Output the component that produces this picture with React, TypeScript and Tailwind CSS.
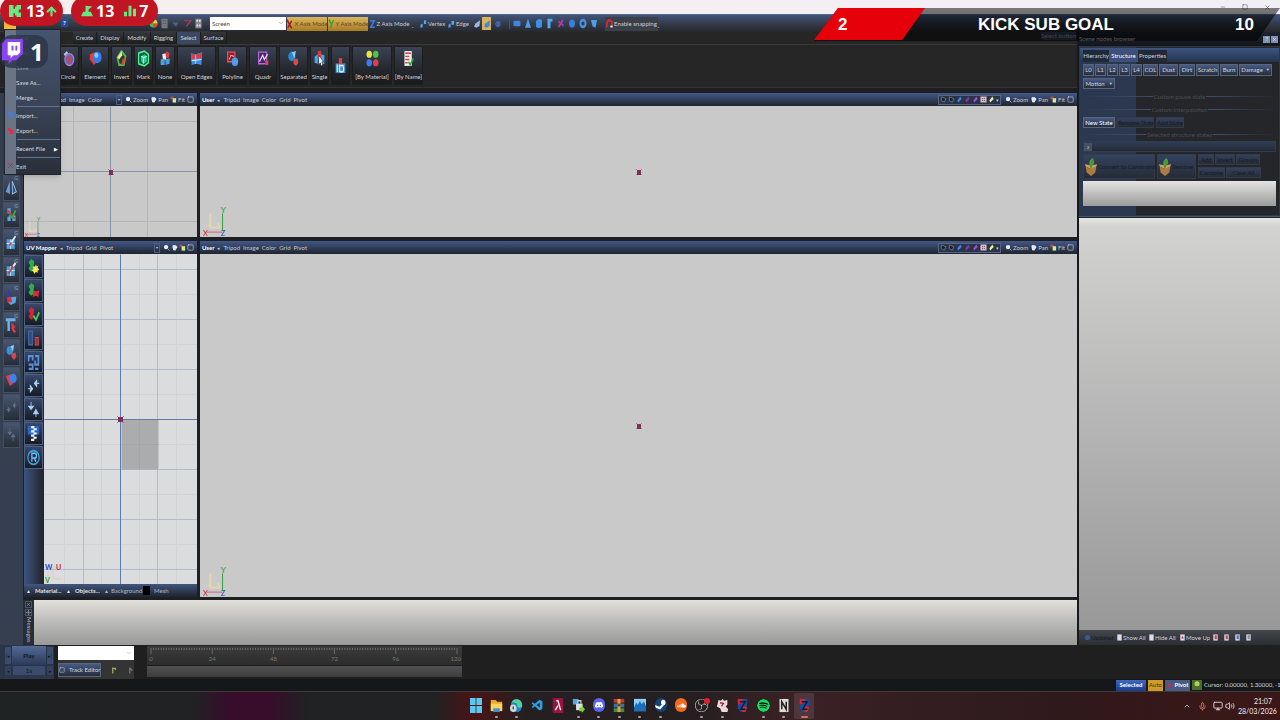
import type { ReactNode } from 'react';
import {
  ArrowUp,
  ChevronDown,
  ChevronUp,
  Mic,
  Minus,
  Monitor,
  Move,
  Square,
  Volume2,
  X,
} from 'lucide-react';
import { SiDiscord, SiSoundcloud, SiSpotify, SiSteam, SiObsstudio } from 'react-icons/si';
import { VscVscode } from 'react-icons/vsc';

type IconProps = { children: ReactNode; className?: string };

function Icon({ children, className = 'size-4' }: IconProps) {
  return (
    <svg
      viewBox="0 0 16 16"
      preserveAspectRatio="none"
      className={`${className} shrink-0`}
      fill="none"
      aria-hidden="true"
    >
      {children}
    </svg>
  );
}

const ribbonTabs = [
  { label: 'Create', width: 'w-[24px]' },
  { label: 'Display', width: 'w-[27px]' },
  { label: 'Modify', width: 'w-[27px]' },
  { label: 'Rigging', width: 'w-[26px]' },
  { label: 'Select', width: 'w-[24px]' },
  { label: 'Surface', width: 'w-[26px]' },
];

const ribbonTools: { label: string; width: string; icon: ReactNode }[] = [
  {
    label: 'Circle',
    width: 'w-[22px]',
    icon: (
      <>
        <path d="M2 4l4-3 3 4-3 3z" fill="#b9c4d6" />
        <circle cx="9" cy="9" r="5.5" fill="#5a6ab4" stroke="#b07ac8" strokeWidth="1.5" />
        <circle cx="9" cy="9" r="3" fill="#c8435c" />
      </>
    ),
  },
  {
    label: 'Element',
    width: 'w-[28px]',
    icon: (
      <>
        <path d="M1 4l6-2 2 10-3 2-5-5z" fill="#e43c3c" />
        <circle cx="10" cy="7" r="5.5" fill="#2f7de6" />
        <circle cx="9" cy="5" r="2.5" fill="#8ec4ff" />
      </>
    ),
  },
  {
    label: 'Invert',
    width: 'w-[21px]',
    icon: (
      <>
        <path d="M8 1l5 5-2 8H5L3 7z" fill="#27402c" stroke="#58b848" strokeWidth="2" />
        <path d="M3 7l5-6 1 4-4 4z" fill="#e8e6a8" />
        <path d="M9 9l4-2-2 7H8z" fill="#d8443c" />
      </>
    ),
  },
  {
    label: 'Mark',
    width: 'w-[19px]',
    icon: (
      <>
        <path d="M2 3l7-2 5 3v8l-5 3-7-2z" fill="#0c5f3e" stroke="#4ff08a" strokeWidth="1.6" />
        <path d="M5 6l4-2 3 2v5l-4 2-3-2z" fill="#35c79c" />
        <path d="M5 6l3 1 4-1M8 7v6" stroke="#b7ffe0" />
      </>
    ),
  },
  {
    label: 'None',
    width: 'w-[20px]',
    icon: (
      <>
        <path d="M9 1l4 2-1 5-4-1z" fill="#e43c3c" />
        <path d="M4 4l4-1 1 6-4 1z" fill="#eceff4" />
        <path d="M2 9l5-1v6H2zM8 9l5-1v5l-5 1z" fill="#4f9fe0" />
      </>
    ),
  },
  {
    label: 'Open Edges',
    width: 'w-[39px]',
    icon: (
      <>
        <path d="M1 3l6 1 8-2-1 12-6-1-6 1z" fill="#3f8fe0" />
        <path d="M1 3l6 2 8-3-1 5-7 2-5-1z" fill="#e23b47" />
        <path d="M7 5v8M2 10l12-1" stroke="#bfe0ff" />
      </>
    ),
  },
  {
    label: 'Polyline',
    width: 'w-[29px]',
    icon: (
      <>
        <path d="M2 2h9v9H2z" fill="#8d1f2c" stroke="#f0505c" strokeWidth="1.4" />
        <path d="M4 9l2-4 4 1" stroke="#ffb0b0" />
        <circle cx="11" cy="11" r="4" fill="#4b9df0" />
      </>
    ),
  },
  {
    label: 'Quadr',
    width: 'w-[28px]',
    icon: (
      <>
        <path d="M2 2h10v11H2z" fill="#46256c" stroke="#b96ad2" strokeWidth="1.4" />
        <path d="M3 11l4-6 2 4 4-5" stroke="#e8d8ff" strokeWidth="1.4" />
        <path d="M10 10h4v4h-4z" fill="#d84458" />
      </>
    ),
  },
  {
    label: 'Separated',
    width: 'w-[29px]',
    icon: (
      <>
        <circle cx="6" cy="6" r="4.5" fill="#2c86d0" />
        <path d="M6 2l5-1-2 7z" fill="#86cdf6" />
        <path d="M8 9l5-1 1 4-3 3-3-2z" fill="#e04848" />
      </>
    ),
  },
  {
    label: 'Single',
    width: 'w-[19px]',
    icon: (
      <>
        <path d="M2 6l4-2v9l-4-1zM10 4l4 1v8l-4 1z" fill="#4aa8ea" />
        <path d="M6 1h4v7H6z" fill="#e43c3c" />
        <path d="M7 5v9l2-2 1 3 2-1-1-3h2z" fill="#fff" stroke="#1b2431" strokeWidth=".6" />
      </>
    ),
  },
  {
    label: '',
    width: 'w-[19px]',
    icon: (
      <>
        <path d="M2 6h12v9H2z" fill="#3e8fd4" />
        <path d="M6 1h4v7H6z" fill="#e43c3c" />
        <path d="M4 7v7M7 7v7M7 8h4l1 3-1 3H7" stroke="#fff" strokeWidth="1.2" />
      </>
    ),
  },
  {
    label: '[By Material]',
    width: 'w-[40px]',
    icon: (
      <>
        <circle cx="4" cy="4" r="3.4" fill="#efe23c" />
        <circle cx="12" cy="4" r="3.4" fill="#4fc24a" />
        <circle cx="4" cy="12" r="3.4" fill="#3c7cf0" />
        <circle cx="12" cy="12" r="3.4" fill="#e43c4c" />
      </>
    ),
  },
  {
    label: '[By Name]',
    width: 'w-[29px]',
    icon: (
      <>
        <path d="M3 1h9v14H3z" fill="#f3f0ee" />
        <path d="M4 3h7M4 6h5M4 9h5M4 12h3" stroke="#c8404c" strokeWidth="1.4" />
        <path d="M8 11l2 3 4-6" stroke="#35a83a" strokeWidth="1.8" />
      </>
    ),
  },
];

const mirrorTools: ReactNode[] = [
  <>
    <path d="M6 2v12L1 12z" fill="#6f9fd8" />
    <path d="M9 2v12l5-2z" fill="#31558c" stroke="#9cc3ec" />
  </>,
  <>
    <path d="M3 2h4v5H3zM9 9h4v5H9zM3 10h4v4H3z" fill="#5caade" />
    <path d="M3 4l9 8" stroke="#d83c3c" strokeWidth="2" />
    <path d="M5 9l4 2 4-7" stroke="#35b048" strokeWidth="2" />
  </>,
  <>
    <path d="M2 5h10v9H2z" fill="#4fa3dc" />
    <path d="M2 9h10M7 5v9" stroke="#bfe4fb" />
    <path d="M5 11l8-9" stroke="#e8edf2" strokeWidth="2" />
    <path d="M5 11l3-3" stroke="#e03c3c" strokeWidth="2" />
  </>,
  <>
    <path d="M2 5h10v9H2z" fill="#4fa3dc" />
    <path d="M2 9h10M7 5v9" stroke="#bfe4fb" />
    <path d="M4 12l9-10" stroke="#d83c3c" strokeWidth="2" />
    <path d="M10 5l3-3" stroke="#f2f4f7" strokeWidth="2" />
  </>,
  <>
    <path d="M5 8l9-1-1 6-6 2-4-3z" fill="#58a8e0" />
    <path d="M5 1v9" stroke="#3038c8" strokeWidth="2.5" />
    <path d="M2 8l5-1 2 5-5 1z" fill="#d83040" />
  </>,
  <>
    <path d="M1 2h12v3H1zM3 5h3v9H3z" fill="#6fb2ea" />
    <path d="M8 6l5 4-2 2 3 3-3 1-3-4z" fill="#e03848" />
  </>,
  <>
    <circle cx="6" cy="6" r="4" fill="#3d8fd8" />
    <path d="M7 2l4-1-1 6z" fill="#9ad4fa" />
    <path d="M8 9l5-1 1 4-3 3-3-3z" fill="#d84450" />
  </>,
  <>
    <path d="M1 5l6-2 3 9-4 2z" fill="#e43c48" />
    <circle cx="10" cy="7" r="4.5" fill="#3b82ea" />
  </>,
  <path d="M2 10h4M6 10l-2-2v4zM14 6h-4M10 6l2-2v4z" stroke="#5e6e86" fill="#5e6e86" />,
  <path d="M6 2v4M6 8L4 6h4zM10 14v-4M10 8l2 2H8z" stroke="#5e6e86" fill="#5e6e86" />,
];

const uvTools: ReactNode[] = [
  <>
    <path d="M5 1l4 2-1 5 2 2-5 3-3-3 2-3-2-3z" fill="#2fae4a" />
    <path d="M11 6l1 2 2-1-1 2 2 2-2 1v2l-2-1-2 2-1-2-2-1 2-2-1-2h3z" fill="#f6ee5c" />
  </>,
  <>
    <path d="M5 1l4 2-1 5 2 2-5 3-3-3 2-3-2-3z" fill="#2fae4a" />
    <path d="M8 8l3 1 4-1-1 6-3-1-4 1z" fill="#de2c3c" />
  </>,
  <>
    <path d="M5 1l4 2-1 5 2 2-5 3-3-3 2-3-2-3z" fill="#cf2638" />
    <path d="M8 9l3 4 4-7" stroke="#3fd060" strokeWidth="2" />
  </>,
  <>
    <path d="M2 1h5v13H2z" fill="#2e4f86" stroke="#4b6fa8" />
    <path d="M10 7h4v7h-4z" fill="#963540" stroke="#c84c54" />
  </>,
  <path d="M2 7V2h5v4M10 2h4v8h-4V6M2 10h5v4H2M10 14h4" stroke="#5d8fe0" strokeWidth="2" />,
  <path d="M1 11h3M7 11l-3-3v6zM15 6h-3M9 6l3-3v6z" stroke="#a9d2f6" fill="#a9d2f6" />,
  <path d="M5 1v4M5 8L2 5h6zM11 15v-3M11 8l3 4H8z" stroke="#a9d2f6" fill="#a9d2f6" />,
  <>
    <path d="M1 1h14v8H1z" fill="#2c66c8" />
    <path d="M5 1h4v2H5zM8 3h4v2H8zM5 5h4v2H5zM8 7h4v2H8zM5 9h4v2H5zM8 11h4v2H8zM5 13h4v2H5z" fill="#eef4fb" />
  </>,
  <>
    <ellipse cx="8" cy="8" rx="7" ry="6.5" stroke="#3fa3e4" strokeWidth="1.5" />
    <path d="M6 12V4h3.500a2 2 0 010 4.500H6M9 8.500l2 3.500" stroke="#6cc4f8" strokeWidth="1.500" />
  </>,
];

const menuItems = [
  { label: 'New', dim: true },
  { label: 'Open...', dim: true },
  { label: 'Save', dim: true },
  { label: 'Save As...' },
  { label: 'Merge...' },
  { label: 'Import...', group: true, icon: '#3f7ee0' },
  { label: 'Export...', icon: '#dc3040' },
  { label: 'Recent File', group: true, submenu: true },
  { label: 'Exit', group: true, exit: true },
];

const materialButtons = [
  { label: 'L0', width: 'w-[11px]' },
  { label: 'L1', width: 'w-[11px]' },
  { label: 'L2', width: 'w-[11px]' },
  { label: 'L3', width: 'w-[11px]' },
  { label: 'L4', width: 'w-[11px]' },
  { label: 'COL', width: 'w-[15px]' },
  { label: 'Dust', width: 'w-[19px]' },
  { label: 'Dirt', width: 'w-[16px]' },
  { label: 'Scratch', width: 'w-[23px]' },
  { label: 'Burn', width: 'w-[18px]' },
];

const primitives: ReactNode[] = [
  <rect x="1" y="4" width="14" height="8" rx="2" fill="#3d86dc" />,
  <path d="M8 1l6 13H2z" fill="#4f9be8" />,
  <path d="M2 4l7-3 5 2v10l-7 2-5-2z" fill="#3b8fe4" />,
  <path d="M3 1h10v4H9v10H3z" fill="#57a8f0" />,
  <path d="M3 13L12 3M3 5l10 6" stroke="#b03cac" strokeWidth="3" />,
  <circle cx="8" cy="8" r="6" fill="#3a7fe0" />,
  <circle cx="8" cy="8" r="5" stroke="#4a90e4" strokeWidth="4" />,
  <path d="M2 3h12l-3 11-6-2z" fill="#4f9fe8" />,
];

const viewGlyphs = ['#6d7b92', '#6d7b92', '#3f86ea', '#7a3fa0', '#a04fd0', '#dfb8c4', '#eef0a0'];

// Shared look of the small raised buttons
const raised =
  'flex items-center justify-center border border-[#59657a] bg-linear-to-b from-[#465a85] to-[#262e3e]';
const disabledRaised =
  'border border-[#343c4a] bg-linear-to-b from-[#34425f] to-[#262b36] text-[#171b23]';

function MainToolbar() {
  return (
    <div className="flex h-[18px] items-center border-t border-[#53688e] bg-linear-to-b from-[#42557b] via-[#343c4b] to-[#26282c] text-[#c9ccd3]">
      <div className="flex h-full w-[210px] shrink-0 items-center gap-[3px] border-b border-[#33373e] pl-[61px]">
        <button aria-label="Help" className="flex w-[7px] justify-center bg-[#274aa0] font-bold text-white">?</button>
        <Icon className="ml-[78px] size-[9px]">
          <circle cx="8" cy="8" r="7" fill="#45b848" />
          <path d="M8 8V1a7 7 0 017 7z" fill="#e8d33c" />
          <path d="M8 8h7a7 7 0 01-7 7z" fill="#dd4638" />
        </Icon>
        <Icon className="h-[11px] w-[7px]"><path d="M1 1h14v14H1z" fill="#77797d" /><path d="M4 4h8M4 8h8" stroke="#44474c" /></Icon>
        <Icon className="size-[9px]"><path d="M2 6h11l-4 8z" fill="#50647c" /></Icon>
        <Icon className="size-[9px]"><path d="M2 3h12L6 13" stroke="#ba3d50" strokeWidth="2" /></Icon>
        <Icon className="h-[11px] w-[7px]"><path d="M1 1h14v14H1z" fill="#888" /><path d="M3 4h4M9 4h4M3 11h4M9 11h4" stroke="#ddd" strokeWidth="3" /></Icon>
      </div>
      <div className="relative mr-px w-[76px] shrink-0">
        <select aria-label="Coordinate space" className="h-[13px] w-full appearance-none bg-white pl-[2px] text-[#444]">
          <option>Screen</option>
        </select>
        <ChevronDown className="pointer-events-none absolute top-[3px] right-[2px] size-[6px] text-gray-500" />
      </div>
      <button className="mr-px flex h-[14px] w-[40px] items-center justify-center gap-px bg-linear-to-b from-[#dbb65e] to-[#a87c25] text-[#664a16]">
        <Icon className="h-[10px] w-[7px]"><path d="M2 1l11 14M13 3L4 14" stroke="#a51820" strokeWidth="3" /></Icon>
        X Axis Mode
      </button>
      <button className="mr-px flex h-[14px] w-[40px] items-center justify-center gap-px bg-linear-to-b from-[#dbb65e] to-[#a87c25] text-[#664a16]">
        <Icon className="h-[10px] w-[7px]"><path d="M2 1l6 7 5-6M8 8l-2 7" stroke="#35a030" strokeWidth="3" /></Icon>
        Y Axis Mode
      </button>
      <button className="flex h-[14px] w-[40px] items-center justify-center gap-px">
        <Icon className="h-[10px] w-[7px]"><path d="M3 3h9L4 13h9" stroke="#3f78dc" strokeWidth="3" /></Icon>
        Z Axis Mode
      </button>
      <span className="mt-[4px] w-[11px] pl-[3px] text-white">.</span>
      <button className="flex w-[28px] items-center gap-px">
        <Icon className="h-[10px] w-[7px]"><path d="M1 9l5-2v6l-5 1zM9 2h5v6H9z" fill="#58a4ee" /></Icon>
        Vertex
      </button>
      <button className="flex w-[24px] items-center gap-px">
        <Icon className="h-[10px] w-[7px]"><path d="M1 9l5-2v6l-5 1zM8 3h6v6H8z" fill="#58a4ee" /></Icon>
        Edge
      </button>
      <button aria-label="Polygon" className="flex w-[10px] justify-center">
        <Icon className="h-[10px] w-[8px]"><path d="M2 12l3-5 9-5-1 9-6 3z" fill="#9cb8dc" /></Icon>
      </button>
      <button aria-label="Element" className="flex h-[13px] w-[9px] items-center justify-center bg-[#d9b25c]">
        <Icon className="h-[10px] w-[8px]"><path d="M2 12l3-5 9-5-1 9-6 3z" fill="#3f88e6" /></Icon>
      </button>
      <button aria-label="Object" className="flex w-[13px] justify-center">
        <Icon className="h-[10px] w-[8px]"><circle cx="8" cy="8" r="5" fill="#2d6bbd" /><path d="M1 6l5 2-2 4z" fill="#a03450" /></Icon>
      </button>
      <div className="ml-[5px] flex w-[96px] items-center gap-[3px] border-l border-[#4a5362] pl-[3px]">
        {primitives.map((shape, i) => (
          <Icon key={i} className="h-[11px] w-[8px]">{shape}</Icon>
        ))}
      </div>
      <button className="flex h-[14px] items-center gap-px bg-[#3b3f47] px-px">
        <Icon className="h-[10px] w-[7px]"><path d="M2 13V8a6 6 0 0112 0v5" stroke="#cc2c34" strokeWidth="4" /><path d="M10 12h5" stroke="#eee" strokeWidth="3" /></Icon>
        Enable snapping
      </button>
      <span className="mt-[4px] text-white">.</span>
    </div>
  );
}

function Ribbon() {
  return (
    <div className="bg-[#262626]">
      <div className="flex h-[13px] items-end border-b border-[#3a3a3a] pl-[73px] text-[#d4d6da]">
        {ribbonTabs.map((tab) => (
          <button
            key={tab.label}
            className={`h-[12px] ${tab.width} border-r border-[#1a1b1d] ${
              tab.label === 'Select' ? 'bg-[#3a4864]' : 'bg-linear-to-b from-[#34373d] to-[#1d1e20]'
            }`}
          >
            {tab.label}
          </button>
        ))}
        <span className="mr-px ml-auto self-start bg-[#323f58] text-[#9aa2b2]">Select button</span>
      </div>
      <div className="flex h-[43px] gap-[2px] border-b border-[#343434] pt-px pb-[2px] pl-[57px] text-[#d4d6da]">
        {ribbonTools.map((tool) => (
          <button
            key={tool.width + tool.label}
            aria-label={tool.label || 'Identifier'}
            className={`flex flex-col items-center justify-center gap-[6px] border border-[#1c1d1f] bg-linear-to-b from-[#3a4355] via-[#282c34] to-[#191a1b] ${tool.width}`}
          >
            <Icon className="h-[17px] w-[13px]">{tool.icon}</Icon>
            {tool.label && <span>{tool.label}</span>}
          </button>
        ))}
      </div>
      <div className="h-[5px] bg-[#1e1f20]" />
    </div>
  );
}

function ViewHeader({ title, items, full, compact }: { title: string; items: string[]; full?: boolean; compact?: boolean }) {
  return (
    <div className="flex h-[13px] shrink-0 items-center bg-linear-to-b from-[#43598a] to-[#1f2530] text-[#c4c8d0]">
      <span className="px-[2px] font-bold text-white">{title}</span>
      <span className="mx-px text-[5px]">◂</span>
      <div className="flex gap-[3px] pl-[2px]">
        {items.map((item) => (
          <button key={item}>{item}</button>
        ))}
      </div>
      <div className="ml-auto flex items-center gap-px pr-[3px]">
        {full && (
          <div className="mr-[3px] flex items-center gap-px border border-[#566684] bg-[#2b3447] px-px">
            {viewGlyphs.map((color, i) => (
              <Icon key={i} className="size-[7px]">
                {i < 2 ? (
                  <path d="M3 2l10 4-3 8-7-3z" fill="#171c26" stroke={color} strokeWidth="2" />
                ) : i === 5 ? (
                  <path d="M1 1h14v14H1zM5 5v2h2V5zM9 5v2h2V5zM5 9v2h2V9zM9 9v2h2V9z" fill={color} fillRule="evenodd" />
                ) : (
                  <path d="M5 15l-2-5 7-9 3 6z" fill={color} />
                )}
              </Icon>
            ))}
            <span className="text-[5px]">▾</span>
          </div>
        )}
        {!full && <span className="mr-[2px] border border-[#4d5e80] px-px text-[4px]">▾</span>}
        <Icon className="size-[7px]"><circle cx="7" cy="7" r="5" fill="#e8eefc" /><path d="M10 10l5 5" stroke="#9ab" strokeWidth="2" /></Icon>
        {!compact && <button className="mr-px">Zoom</button>}
        <Icon className="size-[7px]"><path d="M3 5l2-3 6 1 4 4-5 8-5-1z" fill="#dfe6f6" /></Icon>
        {!compact && <button className="mr-px">Pan</button>}
        <Icon className="size-[7px]"><path d="M1 1h7v6H1z" fill="#b84a4a" /><path d="M6 5h8v10H6z" fill="#d4ec8c" /></Icon>
        {!compact && <button className="mr-px">Fit</button>}
        <Square className="size-[7px] text-[#d8dce4]" />
      </div>
    </div>
  );
}

function Pivot() {
  return (
    <svg viewBox="0 0 8 8" className="size-[8px]" aria-hidden="true">
      <path d="M1 1l6 6M7 1L1 7" stroke="#b06a84" strokeWidth=".8" />
      <rect x="2" y="2" width="4" height="5" fill="#7d2f55" />
    </svg>
  );
}

function AxisGizmo({ small }: { small?: boolean }) {
  return (
    <svg
      viewBox="0 0 30 34"
      className={small ? 'absolute bottom-0 left-0 h-[22px] w-[19px]' : 'absolute bottom-0 left-[2px] h-[34px] w-[28px]'}
      aria-hidden="true"
    >
      <path d="M9 10v15h10l-2-5M9 25l-2-3" stroke="#e2d6b4" strokeWidth="2" fill="none" />
      <path d="M22 10v19" stroke="#2e9c36" strokeWidth="1" />
      <path d="M5 30h17" stroke="#d06070" strokeWidth="1" />
      <text x="20" y="9" fontSize="9" fill="#26a032">Y</text>
      <text x="1" y="34" fontSize="8" fill="#d02030">X</text>
      <text x="20" y="34" fontSize="8" fill="#2848d8">Z</text>
    </svg>
  );
}

function UserView({ className }: { className: string }) {
  return (
    <section className={`flex flex-col ${className}`}>
      <ViewHeader title="User" items={['Tripod', 'Image', 'Color', 'Grid', 'Pivot']} full />
      <div className="relative flex flex-1 items-center justify-center bg-[#c9c9c9]">
        <Pivot />
        <AxisGizmo />
      </div>
    </section>
  );
}

function FrontView() {
  return (
    <section className="flex h-[144px] shrink-0 flex-col">
      <ViewHeader title="Front" items={['Tripod', 'Image', 'Color']} />
      <div className="relative flex flex-1 items-center justify-center bg-[#c9c9c9]">
        <svg className="absolute inset-0 h-full w-full" aria-hidden="true">
          <g transform="translate(.5 .5)">
            <path d="M49 0v131M123 0v131M0 15h173M0 115h173" stroke="#b3b7b7" />
            <path d="M86 0v131M0 65h173" stroke="#8794a8" />
          </g>
        </svg>
        <div className="relative">
          <Pivot />
        </div>
        <AxisGizmo small />
      </div>
    </section>
  );
}

function UvMapper() {
  return (
    <section className="flex min-h-0 flex-1 flex-col">
      <ViewHeader title="UV Mapper" items={['Tripod', 'Grid', 'Pivot']} compact />
      <div className="flex min-h-0 flex-1">
        <div className="w-[20px] shrink-0 bg-linear-to-r from-[#3c5480] to-[#20242c] pt-px pr-px">
          <div className="flex h-[214px] flex-col gap-px">
            {uvTools.map((icon, i) => (
              <button
                key={i}
                aria-label={`UV tool ${i + 1}`}
                className="flex flex-1 items-center justify-center border border-[#506080] bg-linear-to-b from-[#36486c] to-[#171b24]"
              >
                <Icon className="h-[17px] w-[13px]">{icon}</Icon>
              </button>
            ))}
          </div>
        </div>
        <div className="relative flex-1 overflow-hidden bg-[#dadcde]">
          <svg className="absolute inset-0 h-full w-full" fill="none" aria-hidden="true">
            <g transform="translate(.5 .5)">
              <path
                d="M20 0v340M57 0v340M95 0v340M132 0v340M0 40h153M0 90h153M0 140h153M0 190h153M0 240h153M0 290h153"
                stroke="#d0d4d7"
              />
              <path d="M39 0v340M113 0v340M0 15h153M0 65h153M0 115h153M0 215h153M0 265h153M0 315h153" stroke="#b1bbcd" />
              <path d="M77 165h37v50H77z" fill="#aaacad" />
              <path d="M95 165v50M77 190h37" stroke="#a3a5a6" />
              <path d="M76 0v340M0 165h153" stroke="#5e7cab" />
            </g>
            <path d="M73 162l7 7M80 162l-7 7" stroke="#c06480" />
            <rect x="74" y="163" width="5" height="5" fill="#7d2f55" />
            <path d="M5 314h10M4 318v8M9 314v11h8" stroke="#dfc9b4" />
            <text x="1" y="316" fontSize="7" fontWeight="700" fill="#2848d8">W</text>
            <text x="12" y="316" fontSize="7" fontWeight="700" fill="#d02030">U</text>
            <text x="1" y="329" fontSize="7" fontWeight="700" fill="#26a032">V</text>
          </svg>
        </div>
      </div>
      <div className="flex h-[13px] items-center bg-linear-to-b from-[#42567f] to-[#1e2430] font-bold text-[#dde0e6]">
        <button className="flex w-[40px] items-center gap-[4px] pl-[2px]"><span className="text-[5px]">▲</span>Material...</button>
        <button className="flex w-[38px] items-center gap-[4px] pl-[2px]"><span className="text-[5px]">▲</span>Objects...</button>
        <button className="flex w-[41px] items-center gap-[2px] pl-[2px] font-normal text-[#aeb4c0]"><span className="text-[5px]">▲</span>Background</button>
        <span className="h-[9px] w-[7px] bg-black" />
        <button className="pl-[4px] font-normal text-[#aeb4c0]">Mesh</button>
      </div>
    </section>
  );
}

function SideToolbar() {
  return (
    <aside className="w-[23px] shrink-0 bg-[#363f50] px-[3px] pt-[81px]">
      <div className="flex h-[274px] flex-col gap-px">
        {mirrorTools.map((icon, i) => (
          <button
            key={i}
            aria-label={`Tool ${i + 1}`}
            className="relative flex flex-1 items-center justify-center border border-[#434e62] bg-linear-to-b from-[#48566f] to-[#272d39]"
          >
            <Icon className="h-[17px] w-[13px]">{icon}</Icon>
            {i < 6 && <span className="absolute top-0 right-px text-[5px] leading-[6px] text-[#9aa5b8]">G</span>}
          </button>
        ))}
      </div>
    </aside>
  );
}

function Divider({ children }: { children: ReactNode }) {
  return (
    <div className="flex h-[9px] items-center gap-px text-[#4b4e55]">
      <span className="h-px flex-1 bg-linear-to-r from-transparent to-[#3f506e]" />
      {children}
      <span className="h-px flex-1 bg-linear-to-l from-transparent to-[#3f506e]" />
    </div>
  );
}

function CrateIcon() {
  return (
    <Icon className="h-[19px] w-[14px]">
      <path d="M2 8l5 2 7-2-1 5-5 3-5-3z" fill="#a97c3f" />
      <path d="M2 8l-1-2 6 1 1 3zM14 8l1-2-6 1-1 3z" fill="#cda35e" />
      <path d="M7 8c-3-4 1-7 3-7 3 3 1 6-1 7z" fill="#4c9a35" />
    </Icon>
  );
}

function ScenePanel() {
  return (
    <aside className="flex w-[203px] shrink-0 flex-col border-l-2 border-[#17191d] bg-[#202124]">
      <div className="flex h-[14px] shrink-0 items-center bg-linear-to-b from-[#1d2330] to-[#141619] text-[#d8dbe2]">
        <span className="flex-1">Scene nodes browser</span>
        <button aria-label="Pin" className="flex size-[7px] items-center justify-center bg-[#8090b4] text-[5px] text-white">?</button>
        <button aria-label="Close panel" className="mr-[2px] ml-px flex size-[7px] items-center justify-center bg-[#8090b4] text-white"><X className="size-[5px]" /></button>
      </div>
      <div className="flex h-[170px] shrink-0 flex-col gap-[2px] border border-[#2c3748] bg-linear-to-r from-[#2b3850] from-28% to-[#25262a] to-28% pt-px pr-[3px] pb-[9px] pl-[3px]">
        <div className="-mr-[3px] -ml-[3px] flex h-[14px] shrink-0 items-end bg-linear-to-b from-[#3f5680] to-[#24344f] pl-[3px] text-[#cfd3da]">
          <button className="h-[12px] w-[26px] bg-[#222936]">Hierarchy</button>
          <button className="h-[12px] w-[29px] bg-[#3b507a] text-white">Structure</button>
          <button className="h-[12px] w-[29px] bg-[#222936]">Properties</button>
        </div>
        <div className="flex gap-px text-[#cfd3da]">
          {materialButtons.map((button) => (
            <button key={button.label} className={`h-[12px] ${raised} ${button.width}`}>{button.label}</button>
          ))}
          <button className={`h-[12px] w-[33px] gap-[3px] ${raised}`}>Damage<span className="text-[4px]">▼</span></button>
        </div>
        <button className={`h-[11px] w-[32px] shrink-0 gap-[4px] text-[#cfd3da] ${raised}`}>Motion<span className="text-[4px]">▼</span></button>
        <div className="flex flex-col gap-[4px] py-px">
          <Divider>Custom pause state</Divider>
          <Divider>Custom interpolation</Divider>
        </div>
        <div className="flex gap-[2px]">
          <button className={`h-[11px] w-[32px] text-white ${raised}`}>New State</button>
          <button disabled className={`h-[11px] w-[37px] ${disabledRaised}`}>Rename State</button>
          <button disabled className={`h-[11px] w-[28px] ${disabledRaised}`}>Add State</button>
        </div>
        <Divider>Selected structure states</Divider>
        <div className="flex h-[11px] shrink-0 items-center border border-[#303c50] bg-linear-to-b from-[#2f3c57] to-[#252a34]">
          <span className="flex size-[8px] items-center justify-center bg-[#46505f] text-[5px] text-[#aab]">a</span>
        </div>
        <div className="flex h-[25px] shrink-0 gap-[2px]">
          <button disabled className={`flex w-[72px] items-center ${disabledRaised}`}><CrateIcon />Convert to Constraint</button>
          <button disabled className={`flex w-[39px] items-center ${disabledRaised}`}><CrateIcon />Remove</button>
          <div className="flex flex-col gap-[2px]">
            <div className="flex gap-px">
              <button disabled className={`h-[11px] w-[16px] ${disabledRaised}`}>Add</button>
              <button disabled className={`h-[11px] w-[20px] ${disabledRaised}`}>Invert</button>
              <button disabled className={`h-[11px] w-[24px] ${disabledRaised}`}>Groups</button>
            </div>
            <div className="flex gap-px">
              <button disabled className={`h-[11px] w-[27px] ${disabledRaised}`}>Combine</button>
              <button disabled className={`h-[11px] w-[35px] ${disabledRaised}`}>Clear All</button>
            </div>
          </div>
        </div>
        <div className="flex-1 bg-linear-to-b from-[#e4e4e2] to-[#9b9b9b]" />
      </div>
      <div className="h-px shrink-0 bg-[#435571]" />
      <div className="flex-1 border-t border-[#202734] bg-[linear-gradient(#e6e6e0,#d2d2d0_8px,#b8b8b8_45%,#989898)]" />
      <div className="flex h-[15px] shrink-0 items-center bg-linear-to-b from-[#43474d] to-[#2c2e31] pl-[5px] text-[#d0d3d8]">
        <button className="flex w-[32px] items-center text-[#17191c]"><Icon className="size-[7px]"><circle cx="8" cy="8" r="6" fill="#35599a" /></Icon>Updated</button>
        <button className="flex w-[32px] items-center"><Icon className="size-[7px]"><path d="M3 1h10v14H3z" fill="#dde" /></Icon>Show All</button>
        <button className="flex w-[31px] items-center"><Icon className="size-[7px]"><path d="M3 1h10v14H3z" fill="#dde" /></Icon>Hide All</button>
        <button className="flex w-[33px] items-center"><Icon className="size-[7px]"><path d="M3 1h10v14H3z" fill="#dde" /><path d="M5 10l3-6 3 6z" fill="#c33" /></Icon>Move Up</button>
        <div className="flex gap-[4px]">
          {['#c8434c', '#c8434c', '#4a6fd0', '#8a8d92'].map((color, i) => (
            <Icon key={i} className="size-[7px]"><path d="M3 1h10v14H3z" fill="#dde" /><path d="M6 3h5v9H6z" fill={color} /></Icon>
          ))}
        </div>
      </div>
    </aside>
  );
}

function Timeline() {
  const ticks = Array.from({ length: 121 }, (_, i) => i);
  return (
    <div className="flex h-[34px] gap-[4px] pt-px pl-[4px]">
      <div className="grid w-[50px] grid-cols-[8px_1fr_8px] grid-rows-[19px_11px] bg-[#2d3850] text-[#12151b]">
        <button aria-label="First frame" className="border border-[#29344a] bg-[#3b4c6d] text-[5px]">|◂</button>
        <button className="bg-linear-to-b from-[#536a97] to-[#2c3a58] font-bold">Play</button>
        <button aria-label="Last frame" className="border border-[#29344a] bg-[#3b4c6d] text-[5px]">▸|</button>
        <button aria-label="Previous key" className="border border-[#29344a] bg-[#34415c] text-[5px]">◂</button>
        <button className="border border-[#29344a] bg-[#3c4c6c]">1x</button>
        <button aria-label="Next key" className="border border-[#29344a] bg-[#34415c] text-[5px]">▸</button>
      </div>
      <div className="flex w-[76px] flex-col bg-[#343434]">
        <div className="relative">
          <select aria-label="Track" className="block h-[14px] w-full appearance-none bg-white" />
          <ChevronDown className="pointer-events-none absolute top-[4px] right-[2px] size-[6px] text-gray-400" />
        </div>
        <div className="mt-px flex flex-1 items-center gap-[10px]">
          <button className={`h-[14px] w-[44px] gap-[4px] text-[#d5d8de] ${raised}`}><Square className="size-[6px]" />Track Editor</button>
          <Icon className="size-[7px]"><path d="M4 1v14M4 3h6v4" stroke="#8fae5a" strokeWidth="3" /></Icon>
          <Icon className="size-[7px]"><path d="M4 1v14M4 3l6 5" stroke="#777" strokeWidth="3" /></Icon>
        </div>
      </div>
      <div className="ml-[9px] w-[315px]">
        <svg viewBox="0 0 315 19" className="h-[19px] w-full bg-linear-to-b from-[#3b3b3b] to-[#2d2d2d]" aria-hidden="true">
          {ticks.map((tick) => (
            <path key={tick} d={`M${4 + tick * 2.55} 2v${tick % 24 === 0 ? 6 : 2}`} stroke="#777" strokeWidth=".8" />
          ))}
          {[0, 24, 48, 72, 96, 120].map((tick) => (
            <text
              key={tick}
              x={tick === 120 ? 314 : 4 + tick * 2.55}
              y="15"
              fontSize="6"
              textAnchor={tick === 120 ? 'end' : 'middle'}
              fill="#777"
            >
              {tick}
            </text>
          ))}
        </svg>
        <div className="h-[12px] border-t border-[#1c1c1c] bg-linear-to-b from-[#505050] to-[#3e3e3e]" />
      </div>
    </div>
  );
}

function StatusBar() {
  return (
    <div className="flex h-[12px] items-center justify-end gap-[2px] bg-[#161718] text-[#d4d6da]">
      <button className="h-[11px] w-[30px] bg-linear-to-b from-[#3f68c0] to-[#1a3c8c] font-bold text-white">Selected</button>
      <button className="h-[11px] w-[15px] bg-[#d09a2a] text-[#4a3204]">Auto</button>
      <button className="flex h-[11px] w-[25px] items-center justify-center gap-[3px] bg-[#4a5a80] font-bold text-white">
        <Icon className="size-[5px]"><circle cx="8" cy="8" r="6" fill="#b83450" /></Icon>Pivot
      </button>
      <Icon className="size-[10px]"><path d="M0 0h16v16H0z" fill="#46702c" /><circle cx="8" cy="6" r="4" fill="#b4cf5a" /></Icon>
      <span className="w-[76px]">Cursor: 0.00000, 1.30000, -1.24</span>
    </div>
  );
}

const zModeler = (
  <Icon className="size-[15px]">
    <path d="M3 1h10v5l-2 9H6l-3-4z" fill="#1f4a9c" />
    <path d="M3 1h6l-3 5-3 1zM9 8l4 2-2 5H8z" fill="#d8262e" />
    <path d="M5 4h6l-5 8h5" stroke="#141b30" strokeWidth="1.500" />
  </Icon>
);

const taskbarApps: { name: string; icon: ReactNode; open?: boolean; active?: boolean }[] = [
  { name: 'Start', icon: <Icon className="h-[15px] w-[12px]"><path d="M0 0h7.500v7.500H0zM8.500 0H16v7.500H8.500zM0 8.500h7.500V16H0zM8.500 8.500H16V16H8.500z" fill="#58c8f4" /></Icon> },
  { name: 'Explorer', open: true, icon: <Icon className="h-[15px] w-[13px]"><path d="M1 2h6l2 2h6v9H1z" fill="#e9a825" /><path d="M1 6h14v8H1z" fill="#fbd45c" /><path d="M4 11h8v4H4z" fill="#3c8fd8" /></Icon> },
  { name: 'Edge', open: true, icon: <Icon className="h-[15px] w-[13px]"><circle cx="8" cy="8" r="7" fill="#1e86d0" /><path d="M2 5c3-6 13-4 13 3 0 3-5 3-6 1 1-3-3-5-7-4z" fill="#54d492" /><circle cx="4" cy="11" r="4" fill="#d4d8dc" /><path d="M4 9v3" stroke="#333" strokeWidth="1.500" /></Icon> },
  { name: 'Code', icon: <VscVscode className="size-[13px] text-[#2d9fe6]" /> },
  { name: 'Lambda', icon: <Icon className="h-[15px] w-[14px]"><path d="M2 0h12v16H2z" fill="#9c1340" /><path d="M6 3h2l3 10M8 8l-3 5" stroke="#fff" strokeWidth="1.500" /></Icon> },
  { name: 'WinSCP', open: true, icon: <Icon className="h-[15px] w-[13px]"><path d="M1 1h7v6H1z" fill="#52a8dc" /><path d="M5 6h8v7H5z" fill="#dfe1e3" /><path d="M7 6V3h4v3" stroke="#c4c8cc" strokeWidth="1.500" /><path d="M9 10h3V8l4 4-4 4v-2H9z" fill="#79d635" /></Icon> },
  { name: 'Discord', open: true, icon: <span className="flex h-[14px] w-[12px] items-center justify-center rounded-full bg-[#5865f2]"><SiDiscord className="size-[8px] text-white" /></span> },
  { name: 'WinRAR', open: true, icon: <Icon className="h-[15px] w-[12px]"><path d="M1 1h14v4H1z" fill="#c0392b" /><path d="M1 6h14v4H1z" fill="#3d6fb4" /><path d="M1 11h14v4H1z" fill="#3e8e41" /><path d="M6 1h4v14H6z" fill="#d6a84a" /><path d="M6 6h4v3H6z" fill="#63431a" /></Icon> },
  { name: 'Monitor', open: true, icon: <Icon className="h-[14px] w-[12px]"><path d="M0 1h16v14H0z" fill="#8fd0f8" /><path d="M0 11l3-6 2 3 3-5 2 4 3-3 3 5v6H0z" fill="#1b6fb8" /></Icon> },
  { name: 'Steam', open: true, icon: <Icon className="h-[14px] w-[12px]"><circle cx="8" cy="8" r="8" fill="#12447c" /><circle cx="11" cy="5" r="3" fill="#fff" /><path d="M0 8l6 2 5-4 1 2-5 5-6-2z" fill="#fff" /></Icon> },
  { name: 'SoundCloud', icon: <span className="flex h-[14px] w-[12px] items-center justify-center rounded-full bg-[#f26a1e]"><SiSoundcloud className="size-[9px] text-white" /></span> },
  { name: 'OBS', open: true, icon: <span className="relative"><SiObsstudio className="size-[13px] text-[#dcdcdc]" /><span className="absolute -top-px -right-[2px] size-[6px] rounded-full bg-[#e0202c]" /></span> },
  { name: 'Paw', open: true, icon: <Icon className="h-[15px] w-[13px]"><path d="M3 2l3 1 2-2 2 2 4-1v5l-2 2 3 3-1 3H7l-2-4-4-2 1-3z" fill="#ead9da" /><path d="M5 5l5 1M7 9l2-4" stroke="#9c2a38" strokeWidth="1.500" /></Icon> },
  { name: 'ZModeler', icon: zModeler },
  { name: 'Spotify', open: true, icon: <SiSpotify className="size-[13px] rounded-full bg-black text-[#1ed760]" /> },
  { name: 'Notepad', open: true, icon: <Icon className="h-[15px] w-[12px]"><path d="M2 1h12v14H2z" fill="#dcdcd4" /><path d="M5 12V4l6 8V4" stroke="#222" strokeWidth="2" /></Icon> },
  { name: 'ZModeler 3', open: true, active: true, icon: zModeler },
];

function Taskbar() {
  return (
    <footer className="relative flex h-[29px] shrink-0 items-center justify-center border-t border-[#3c3a3b] bg-[linear-gradient(90deg,#202324_0%,#202224_15%,#380c2b_18%,#380c2b_21%,#202223_24%,#212223_34%,#491315_37%,#261f21_41%,#251f21_54%,#3a2125_62%,#301b1e_78%,#30191b_84%,#3c1717_100%)]">
      <div className="grid w-[349px] grid-cols-17">
        {taskbarApps.map((app) => (
          <button
            key={app.name}
            aria-label={app.name}
            className={`relative flex h-[26px] items-center justify-center rounded-xs pb-[2px] ${app.active ? 'bg-white/10' : ''}`}
          >
            {app.icon}
            {app.open && (
              <span className={`absolute bottom-px h-[2px] rounded-full ${app.active ? 'w-[7px] bg-[#e0685c]' : 'w-[3px] bg-[#a5a0a0]'}`} />
            )}
          </button>
        ))}
      </div>
      <div className="absolute inset-y-0 right-[8px] flex items-center text-[#f0ecec]">
        <ChevronUp className="mr-[7px] size-[8px]" />
        <Mic className="mr-[6px] size-[9px] text-[#e08a60]" />
        <Monitor className="mr-[2px] size-[10px]" />
        <Volume2 className="mr-[3px] size-[10px]" />
        <div className="w-[34px] text-right text-[7px] leading-[10px]">
          <p>21:07</p>
          <p>28/03/2026</p>
        </div>
      </div>
    </footer>
  );
}

function FileMenu() {
  return (
    <div role="menu" className="absolute top-[29px] left-[4px] w-[57px] border border-[#1e232c] bg-linear-to-b from-[#46546f] via-[#3b4557] to-[#2a2f39] text-[#d6d9df] shadow-md">
      {menuItems.map((item) => (
        <div key={item.label} className="flex">
          <span className="flex w-[11px] shrink-0 items-center justify-center bg-[#6a7485]">
            {item.icon && <Icon className="size-[8px]"><path d="M2 2h5v4h6v8H6V8H2z" fill={item.icon} /></Icon>}
            {item.exit && <X className="size-[9px] text-[#a03444]" />}
          </span>
          <div className="flex-1">
            {item.group && <div className="my-px ml-px h-px bg-[#5b7797]" />}
            <button
              role="menuitem"
              className={`flex h-[15px] w-full items-center justify-between pr-[2px] ${item.dim ? 'text-[#8d96a6]' : ''}`}
            >
              {item.label}
              {item.submenu && <span className="text-[5px] text-white">▶</span>}
            </button>
          </div>
        </div>
      ))}
    </div>
  );
}

function StreamBadges() {
  return (
    <div className="absolute top-[-4px] left-0 flex gap-[8px] font-['Open_Sans',sans-serif] text-base leading-none font-bold text-white">
      <div className="flex h-[30px] w-[63px] items-center gap-[5px] rounded-full bg-[#c01522] pl-[9px]">
        <Icon className="size-[12px]"><path d="M0 0h6v5h2V2h2V0h6v6h-3v4h3v6h-6v-2H8v-3H6v5H0z" fill="#63ea82" /></Icon>
        13
        <ArrowUp className="-ml-[4px] size-[13px] text-[#63ea82]" strokeWidth={4} />
      </div>
      <div className="flex h-[30px] w-[87px] items-center rounded-full bg-[#c01522] pl-[10px]">
        <Icon className="mr-[3px] size-[12px]"><path d="M0 15l3-6h10l3 6z" fill="#63ea82" /><path d="M6 10V1l9 1-5 4v4z" fill="#63ea82" /></Icon>
        13
        <Icon className="mr-[3px] ml-[10px] size-[12px]"><path d="M2 9v6M8 1v14M14 5v10" stroke="#63ea82" strokeWidth="4" /></Icon>
        7
      </div>
    </div>
  );
}

function ViewerBadge() {
  return (
    <div className="absolute top-[35px] left-0 flex h-[33px] w-[48px] items-center gap-[6px] rounded-xl bg-[#2b3447]/80 pl-px font-['Open_Sans',sans-serif] text-2xl font-bold text-white">
      <svg viewBox="0 0 24 26" className="h-[25px] w-[23px]" aria-hidden="true">
        <path d="M5 0h18v15l-7 7h-4l-4 4v-4H1V5z" fill="#8b45f0" />
        <path d="M7 3h13v11l-3 3h-4l-3 3v-3H7z" fill="#fff" />
        <path d="M12 7v5M16 7v5" stroke="#8b45f0" strokeWidth="2" />
      </svg>
      1
    </div>
  );
}

function GoalBar() {
  return (
    <div className="absolute top-[8px] right-0 h-[33px] w-[466px] text-[17px] leading-none font-bold text-white">
      <div className="absolute inset-0 bg-linear-to-b from-black/50 via-black/60 to-black/60 [clip-path:polygon(24px_0,100%_0,443px_100%,0_100%)]" />
      <div className="absolute inset-y-0 left-0 h-[32px] w-[111px] bg-[#e6000a] [clip-path:polygon(24px_0,100%_0,88px_100%,0_100%)]" />
      <div className="relative flex h-[32px] items-center pr-[26px] pl-[24px] font-['Liberation_Sans',sans-serif]">
        <span className="w-[48px]">2</span>
        <span className="flex-1 pl-[92px]">KICK SUB GOAL</span>
        <span>10</span>
      </div>
    </div>
  );
}

export default function App() {
  return (
    <div className="relative flex min-h-screen flex-col overflow-hidden bg-[#202020] font-[Lato,sans-serif] text-[6px] leading-[8px] whitespace-nowrap">
      <header className="flex h-[14px] shrink-0 items-center justify-end gap-[16px] bg-linear-to-r from-[#f8eeee] to-[#f1eff6] pr-[9px] text-[#555]">
        <button aria-label="Minimize"><Minus className="size-[6px]" /></button>
        <button aria-label="Restore"><Square className="size-[6px]" /></button>
        <button aria-label="Close"><X className="size-[7px]" /></button>
      </header>
      <MainToolbar />
      <div className="flex flex-1">
        <div className="flex min-w-0 flex-1 flex-col">
          <Ribbon />
          <div className="flex flex-1">
            <SideToolbar />
            <div className="flex min-w-0 flex-1 flex-col bg-[#1d1f23]">
              <div className="flex flex-1 gap-[3px] pl-px">
                <div className="flex w-[173px] shrink-0 flex-col gap-[4px]">
                  <FrontView />
                  <UvMapper />
                </div>
                <div className="flex min-w-0 flex-1 flex-col gap-[4px]">
                  <UserView className="h-[144px] shrink-0" />
                  <UserView className="flex-1" />
                </div>
              </div>
              <div className="mt-[3px] flex h-[45px] text-[#b8bdc8]">
                <div className="flex w-[11px] flex-col items-center gap-px bg-[#262c38] pt-px">
                  <button aria-label="Close messages" className="border border-[#4a5468]"><X className="size-[5px]" /></button>
                  <button aria-label="Pin messages" className="border border-[#4a5468]"><Move className="size-[5px]" /></button>
                  <span className="text-[6px] [writing-mode:vertical-rl]">Messages</span>
                </div>
                <div className="flex-1 bg-linear-to-b from-[#e2e1db] via-[#b9b9b8] to-[#9a9a9a]" />
              </div>
            </div>
          </div>
        </div>
        <ScenePanel />
      </div>
      <div className="shrink-0 bg-linear-to-r from-[#2b3548] from-[36px] to-[#1f1f20] to-[36px]">
        <Timeline />
        <StatusBar />
      </div>
      <Taskbar />
      <button aria-label="Application menu" className="absolute top-[20px] left-[4px] h-[9px] w-[12px] bg-linear-to-b from-[#f09a20] to-[#f6c040]" />
      <FileMenu />
      <ViewerBadge />
      <StreamBadges />
      <GoalBar />
    </div>
  );
}
